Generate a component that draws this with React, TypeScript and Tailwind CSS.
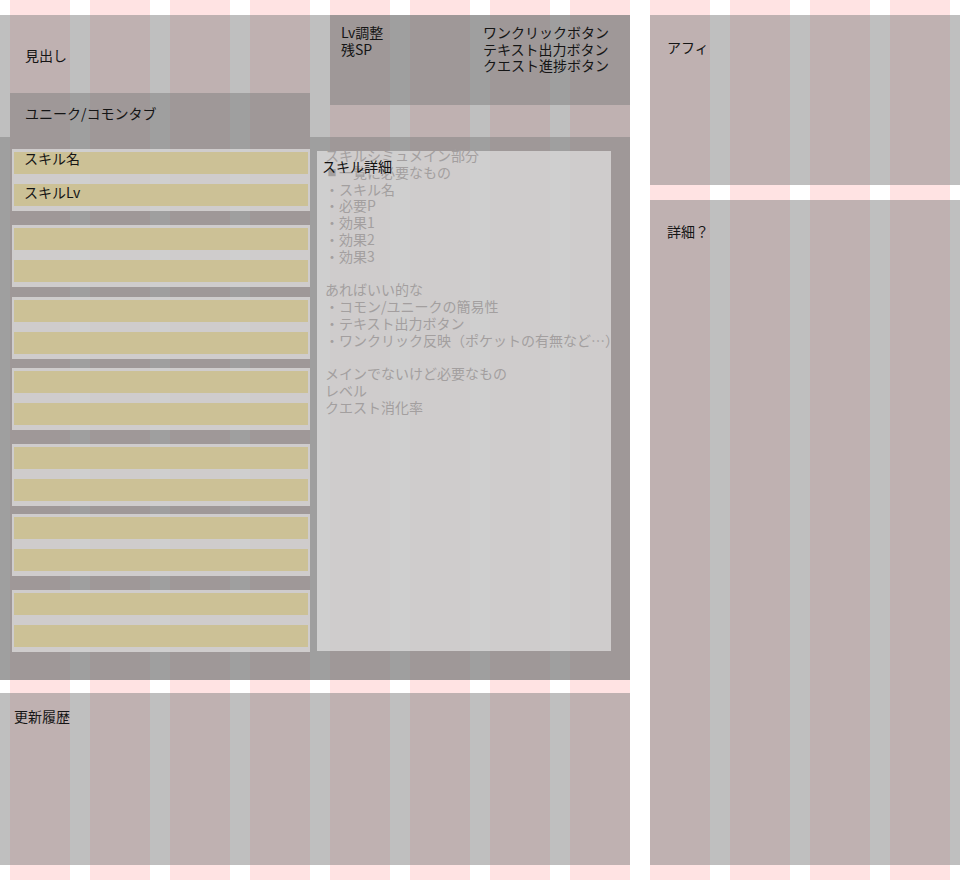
const layer = 'bg-[rgba(128,128,128,0.5)]';

const notes = [
  'スキルシミュメイン部分',
  '■一覧に必要なもの',
  '・スキル名',
  '・必要P',
  '・効果1',
  '・効果2',
  '・効果3',
  '',
  'あればいい的な',
  '・コモン/ユニークの簡易性',
  '・テキスト出力ボタン',
  '・ワンクリック反映（ポケットの有無など…）',
  '',
  'メインでないけど必要なもの',
  'レベル',
  'クエスト消化率',
];

// margin above each skill box (first one is handled by list padding)
const boxGaps = ['', 'mt-[14px]', 'mt-[10px]', 'mt-[9px]', 'mt-[14px]', 'mt-[8px]', 'mt-[14px]'];

function SkillBox({ gap, first }: { gap: string; first?: boolean }) {
  return (
    <div className={`h-[62px] bg-white/50 px-[2px] pt-[3px] ${gap}`}>
      <div className="h-[22px] bg-[rgba(203,190,140,0.85)] pl-[10px]">
        {first && <p className="leading-[13px]">スキル名</p>}
      </div>
      <div className="h-[22px] mt-[10px] bg-[rgba(203,190,140,0.85)] pl-[10px]">
        {first && <p className="leading-[17px]">スキルLv</p>}
      </div>
    </div>
  );
}

function NoteLine({ text }: { text: string }) {
  if (text.startsWith('■')) {
    return (
      <p className="h-[16.8px]">
        <span className="inline-block w-[14px] text-center text-[9px] align-top leading-[18px]">■</span>
        {text.slice(1)}
      </p>
    );
  }
  return <p className="h-[16.8px]">{text}</p>;
}

export default function App() {
  return (
    <div className="w-[960px] h-[880px] flex gap-[20px] py-[15px] bg-[repeating-linear-gradient(90deg,#ffffff_0_10px,#ffe3e3_10px_70px,#ffffff_70px_80px)] font-['Noto_Sans_CJK_JP','Noto_Sans',sans-serif] text-[14px] text-[#151515]">
      <div className="w-[630px] flex flex-col">
        <div className={`h-[665px] flex flex-col ${layer}`}>
          {/* header */}
          <div className="h-[122px] flex">
            <div className="w-[330px] flex flex-col">
              <p className="pl-[25px] pt-[32px] leading-[17px]">見出し</p>
              <div className={`mt-auto ml-[10px] w-[300px] h-[44px] pl-[15px] pt-[12px] leading-[17px] ${layer}`}>
                ユニーク/コモンタブ
              </div>
            </div>
            <div className={`w-[300px] h-[90px] flex pt-[9px] leading-[16.5px] ${layer}`}>
              <div className="w-[153px] pl-[11px]">
                <p>Lv調整</p>
                <p>残SP</p>
              </div>
              <div>
                <p>ワンクリックボタン</p>
                <p>テキスト出力ボタン</p>
                <p>クエスト進捗ボタン</p>
              </div>
            </div>
          </div>

          {/* main */}
          <div className={`flex-1 flex ${layer}`}>
            <div className="ml-[12px] w-[298px] pt-[12px] flex flex-col">
              {boxGaps.map((g, i) => (
                <SkillBox key={i} gap={g} first={i === 0} />
              ))}
            </div>
            <div className="relative ml-[7px] mt-[14px] w-[294px] h-[500px] bg-white/50">
              <div className="-mt-[4px] pl-[8px] leading-[16.8px] text-[#a39f9f] whitespace-pre">
                {notes.map((n, i) => (
                  <NoteLine key={i} text={n} />
                ))}
              </div>
              <p className="absolute left-[5px] top-[7px] leading-[17px] text-[#111]">スキル詳細</p>
            </div>
          </div>
        </div>

        <div className={`mt-[13px] flex-1 pl-[14px] pt-[15px] leading-[17px] ${layer}`}>更新履歴</div>
      </div>

      <div className="w-[310px] flex flex-col">
        <div className={`h-[170px] pl-[17px] pt-[24px] leading-[17px] ${layer}`}>アフィ</div>
        <div className={`mt-[15px] flex-1 pl-[17px] pt-[23px] leading-[17px] ${layer}`}>詳細？</div>
      </div>
    </div>
  );
}
